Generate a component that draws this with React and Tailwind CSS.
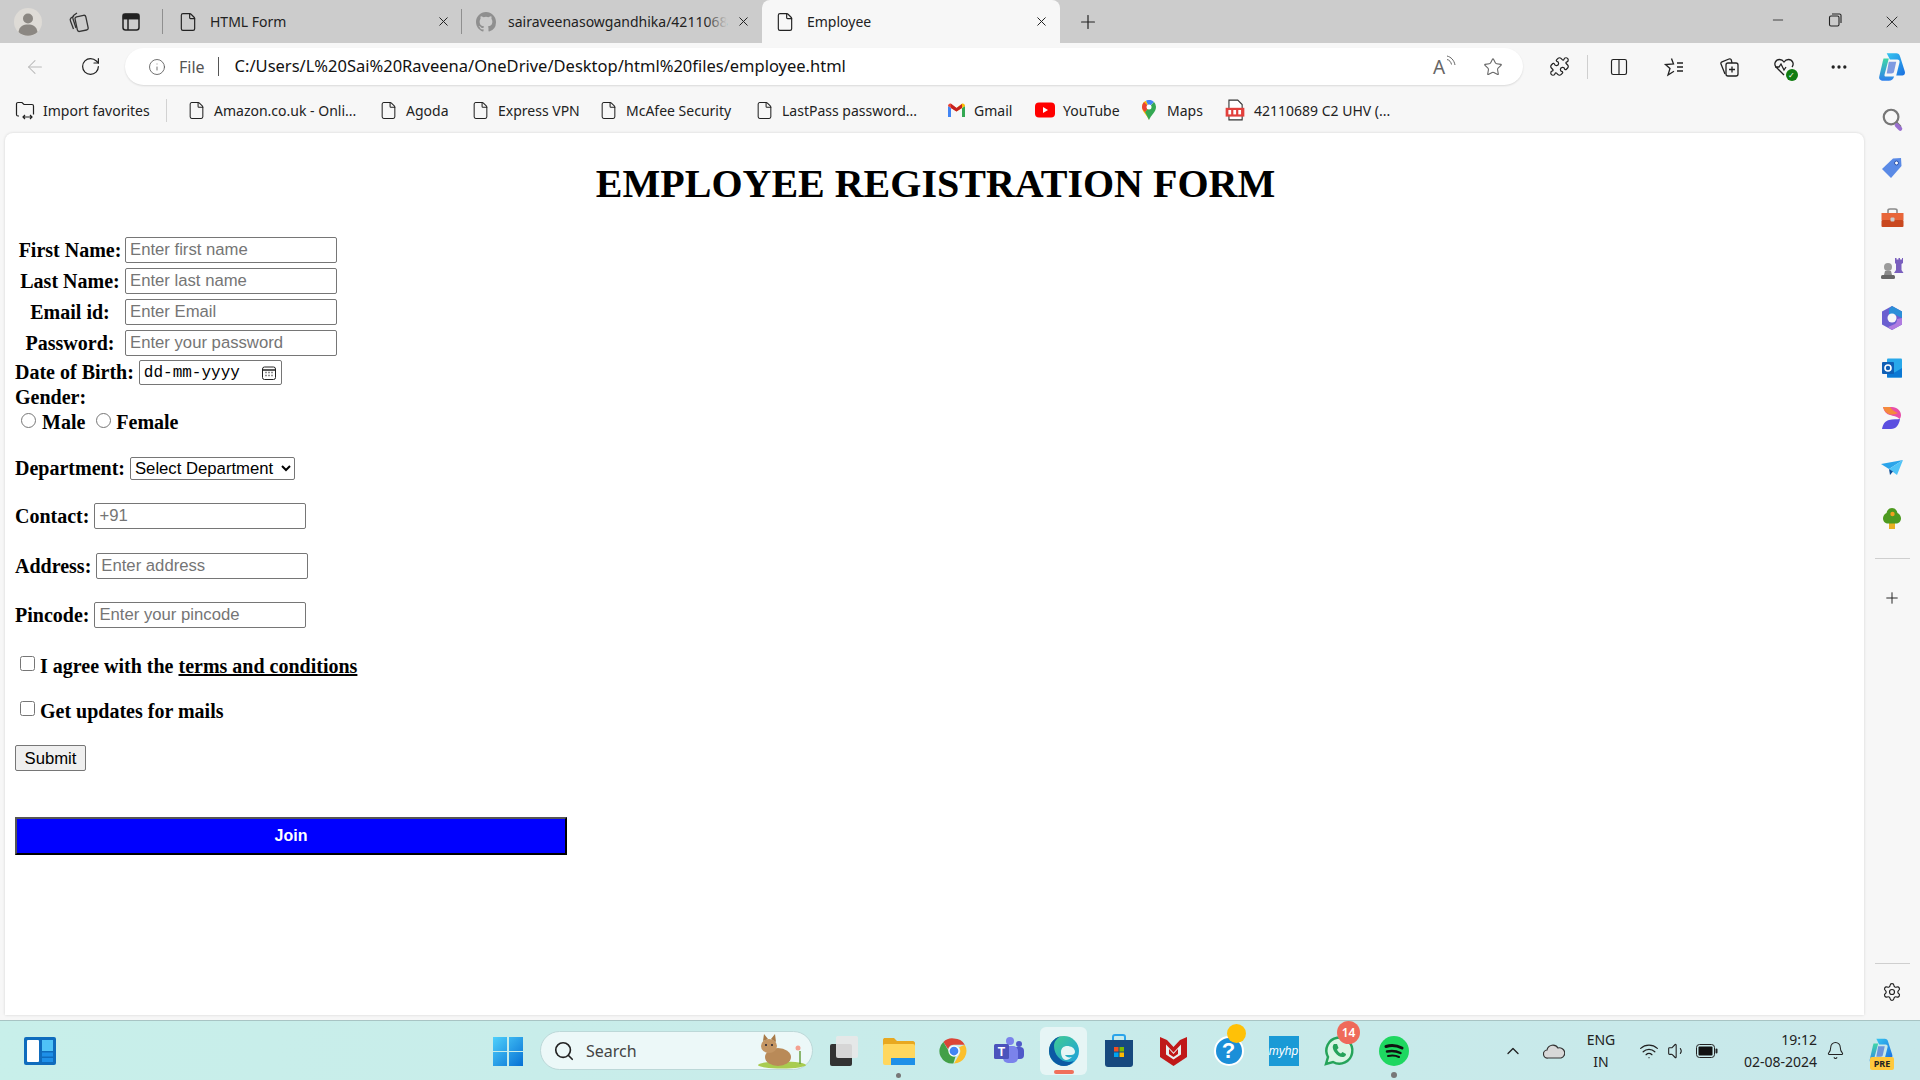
import React from "react";
import { ArrowLeft, Bell, ChevronUp, Columns2, File, Info, Minus, MoreHorizontal, Plus, Puzzle, RotateCw, Search, Settings, Star, Volume1, Wifi, X } from "lucide-react";

function Doc() {
  return <File size={20} strokeWidth={1.4} className="text-[#222]" />;
}

function GithubMark() {
  return (
    <svg width="20" height="20" viewBox="0 0 16 16" fill="#8f8f8f">
      <path d="M8 0C3.58 0 0 3.58 0 8c0 3.54 2.29 6.53 5.47 7.59.4.07.55-.17.55-.38v-1.34c-2.23.48-2.7-1.07-2.7-1.07-.36-.92-.89-1.17-.89-1.17-.73-.5.05-.49.05-.49.8.06 1.23.83 1.23.83.72 1.22 1.87.87 2.33.66.07-.52.28-.87.5-1.07-1.78-.2-3.64-.89-3.64-3.95 0-.87.31-1.59.82-2.15-.08-.2-.36-1.02.08-2.12 0 0 .67-.21 2.2.82a7.6 7.6 0 0 1 4 0c1.53-1.04 2.2-.82 2.2-.82.44 1.1.16 1.92.08 2.12.51.56.82 1.27.82 2.15 0 3.07-1.87 3.75-3.65 3.95.29.25.54.73.54 1.48v2.2c0 .21.15.46.55.38A8 8 0 0 0 16 8c0-4.42-3.58-8-8-8z" />
    </svg>
  );
}

function CopilotIcon({ size = 30 }) {
  return (
    <svg width={size} height={size} viewBox="0 0 32 32">
      <defs>
        <linearGradient id="cop1" x1="0" y1="0" x2="1" y2="1">
          <stop offset="0" stopColor="#36c6f0" />
          <stop offset="1" stopColor="#1b6fe0" />
        </linearGradient>
        <linearGradient id="cop2" x1="0" y1="0" x2="0" y2="1">
          <stop offset="0" stopColor="#3fd6a8" />
          <stop offset="1" stopColor="#2f80ed" />
        </linearGradient>
      </defs>
      <path d="M11 3h9c2 0 3 1 3.6 3L28 20c.8 2.6-.6 4-3 4h-5l3-12c.5-2-.6-3-2-3h-7z" fill="url(#cop1)" />
      <path d="M8 8h5l-4 15c-.4 1.5.4 2 1.5 2H18c-1 3-2.5 4-5 4H8c-3 0-4.6-1.6-4-4l3-13c.2-1 .5-2 1-4z" fill="url(#cop2)" />
      <path d="M13 11h7l-2 9c-.3 1.5-1 2-2.5 2H11z" fill="#1d4fd0" opacity="0.55" />
    </svg>
  );
}

function TabBar() {
  return (
    <div className="h-[43px] bg-[#cccccc] flex items-center text-[14px] text-[#222] font-['Noto_Sans',sans-serif] shrink-0">
      <div className="w-[56px] flex justify-center">
        <svg width="28" height="28" viewBox="0 0 28 28">
          <circle cx="14" cy="14" r="14" fill="#dedbd6" />
          <circle cx="14" cy="10.5" r="5" fill="#8b8782" />
          <path d="M4.5 24c1-6 5-7.5 9.5-7.5s8.500 1.500 9.500 7.500a14 14 0 0 1-19 0z" fill="#8b8782" />
        </svg>
      </div>
      <div className="w-[44px] flex justify-center">
        <svg width="22" height="22" viewBox="0 0 22 22" fill="none" stroke="#333" strokeWidth="1.300">
          <rect x="9" y="5" width="11" height="15" rx="2" transform="rotate(-12 14 12)" />
          <path d="M7 5 4 7c-1 1-1 2-.5 3l3 8M10 2 6.500 4.500C5.500 5.500 5.500 6.500 6 8l3 9" />
        </svg>
      </div>
      <div className="w-[62px] flex justify-center">
        <svg width="20" height="20" viewBox="0 0 20 20" fill="none" stroke="#222" strokeWidth="1.500">
          <rect x="2" y="2" width="16" height="16" rx="2.500" />
          <path d="M2 6.500h16M7 6.500V18" />
          <path d="M2.500 2.500h15v4h-15z" fill="#222" />
        </svg>
      </div>
      <div className="w-px h-[25px] bg-[#8f8f8f] mr-[15px]" />
      <div className="w-[283px] flex items-center pr-[10px]">
        <Doc />
        <span className="ml-[12px] pb-[1px]">HTML Form</span>
        <X size={15} strokeWidth={1.6} className="ml-auto" />
      </div>
      <div className="w-px h-[25px] bg-[#8f8f8f] mr-[14px]" />
      <div className="w-[286px] flex items-center pr-[11px]">
        <GithubMark />
        <span className="relative ml-[12px] pb-[1px] whitespace-nowrap">
          sairaveenasowgandhika/4211068
          <span className="absolute right-0 top-0 bottom-0 w-[22px] bg-gradient-to-r from-transparent to-[#cccccc]" />
        </span>
        <X size={15} strokeWidth={1.6} className="ml-auto" />
      </div>
      <div className="w-[298px] h-[43px] bg-[#f7f7f7] rounded-t-[8px] flex items-center pl-[13px] pr-[11px]">
        <Doc />
        <span className="ml-[12px] pb-[1px]">Employee</span>
        <X size={15} strokeWidth={1.6} className="ml-auto" />
      </div>
      <Plus size={22} strokeWidth={1.3} className="ml-[17px]" />
      <div className="ml-auto flex">
        <div className="w-[57px] flex justify-center"><Minus size={16} strokeWidth={1.2} /></div>
        <div className="w-[57px] flex justify-center">
          <svg width="16" height="16" viewBox="0 0 16 16" fill="none" stroke="#222" strokeWidth="1.100">
            <rect x="2.500" y="4" width="9.500" height="10" rx="1.500" />
            <path d="M5 2h7.500a1.500 1.500 0 0 1 1.500 1.500V11" />
          </svg>
        </div>
        <div className="w-[57px] flex justify-center"><X size={20} strokeWidth={1.1} /></div>
      </div>
    </div>
  );
}

function Toolbar() {
  return (
    <div className="h-[47px] flex items-center shrink-0 text-[#222]">
      <div className="w-[70px] flex justify-center"><ArrowLeft size={22} strokeWidth={1.1} className="text-[#b9b9b9]" /></div>
      <div className="w-[40px] flex justify-center"><RotateCw size={21} strokeWidth={1.4} /></div>
      <div className="w-[1398px] ml-[15px] h-[37px] bg-white rounded-full shadow-[0_1px_2px_rgba(0,0,0,0.12)] flex items-center pl-[23px] pr-[20px] font-['Noto_Sans',sans-serif]">
        <Info size={18} strokeWidth={1.1} className="text-[#555]" />
        <span className="ml-[13px] text-[16px] text-[#555]">File</span>
        <div className="w-px h-[19px] bg-[#555] ml-[13px]" />
        <span className="ml-[16px] text-[16.5px] text-[#111] whitespace-nowrap">C:/Users/L%20Sai%20Raveena/OneDrive/Desktop/html%20files/employee.html</span>
        <div className="ml-auto flex items-center gap-[29px] text-[#666]">
          <span className="relative w-[21px] h-[22px] text-[19px] leading-[22px] font-['Noto_Sans',sans-serif]">
            A
            <svg className="absolute -right-[3px] -top-[1px]" width="11" height="12" viewBox="0 0 11 12" fill="none" stroke="#666" strokeWidth="1">
              <path d="M1 1c4 1 7 4 8 9M1 4.500c2.500.5 4 2.500 4.500 5" />
            </svg>
          </span>
          <Star size={20} strokeWidth={1.3} />
        </div>
      </div>
      <div className="w-[9px]" />
      <div className="w-[55px] flex justify-center"><Puzzle size={21} strokeWidth={1.4} /></div>
      <div className="w-px h-[24px] bg-[#cfcfcf] mr-[3px]" />
      <div className="w-[55px] flex justify-center"><Columns2 size={20} strokeWidth={1.4} /></div>
      <div className="w-[55px] flex justify-center">
        <svg width="22" height="22" viewBox="0 0 22 22" fill="none" stroke="#222" strokeWidth="1.300">
          <path d="M8.500 2.500 10.500 8l-8 .5 4.500 4-2 6.500 6-3.800M14 7h6M14 11h6M14 15h6" />
        </svg>
      </div>
      <div className="w-[55px] flex justify-center">
        <svg width="22" height="22" viewBox="0 0 22 22" fill="none" stroke="#222" strokeWidth="1.300">
          <rect x="8" y="7" width="12" height="13" rx="2" />
          <path d="M14 10.500v6M11 13.500h6M7 18 3 8c-.4-1 0-1.800 1-2.200L11 3c1-.4 2 0 2.300 1L14 7" />
        </svg>
      </div>
      <div className="w-[55px] flex justify-center">
        <span className="relative w-[22px] h-[22px]">
          <svg width="22" height="22" viewBox="0 0 22 22" fill="none" stroke="#222" strokeWidth="1.300">
            <path d="M11 19 3 11C.5 8 2.500 3.500 6.500 3.500c2 0 3.500 1 4.500 2.500 1-1.500 2.500-2.500 4.500-2.500 4 0 6 4.500 3.500 7.500M2 11h4l2-3 3 6 2-3" />
          </svg>
          <span className="absolute -right-[3px] -bottom-[3px] w-[12px] h-[12px] rounded-full bg-[#107c10] text-white text-[8px] leading-[12px] text-center">✓</span>
        </span>
      </div>
      <div className="w-[55px] flex justify-center"><MoreHorizontal size={20} strokeWidth={2} /></div>
      <div className="w-[51px] flex justify-center"><CopilotIcon size={34} /></div>
    </div>
  );
}

function Bookmark({ className, icon, label }) {
  return (
    <div className={"flex items-center whitespace-nowrap " + className}>
      {icon}
      <span className="ml-[8px]">{label}</span>
    </div>
  );
}

function BookmarksBar() {
  const doc = <File size={19} strokeWidth={1.3} className="text-[#222]" />;
  return (
    <div className="h-[40px] mb-[3px] flex items-center pl-[15px] text-[14px] text-[#222] font-['Noto_Sans',sans-serif]">
      <Bookmark
        className="w-[151px]"
        label="Import favorites"
        icon={
          <svg width="20" height="20" viewBox="0 0 20 20" fill="none" stroke="#222" strokeWidth="1.200">
            <path d="M4 16H3a1.500 1.500 0 0 1-1.500-1.500V4A1.500 1.500 0 0 1 3 2.500h4l2 2h8A1.500 1.500 0 0 1 18.500 6v8.500M8 17h9M10 15l-2 2 2 2M15 15l2 2-2 2" />
          </svg>
        }
      />
      <div className="w-px h-[23px] bg-[#d2d2d2] mr-[20px]" />
      <Bookmark className="w-[192px]" icon={doc} label="Amazon.co.uk - Onli..." />
      <Bookmark className="w-[92px]" icon={doc} label="Agoda" />
      <Bookmark className="w-[128px]" icon={doc} label="Express VPN" />
      <Bookmark className="w-[156px]" icon={doc} label="McAfee Security" />
      <Bookmark className="w-[192px]" icon={doc} label="LastPass password..." />
      <Bookmark
        className="w-[88px]"
        label="Gmail"
        icon={
          <svg width="19" height="15" viewBox="0 0 19 15">
            <path d="M1 14V3l3 2v9z" fill="#4285f4" />
            <path d="M15 14V5l3-2v11z" fill="#34a853" />
            <path d="M1 3c0-2 2-3 3.500-2L9.500 5v3.500L1 3z" fill="#ea4335" />
            <path d="M9.500 5l5-4C16 0 18 1 18 3l-8.500 5.500z" fill="#fbbc04" />
            <path d="M4 5l5.500 3.500L15 5V1L9.500 5 4 1z" fill="#c5221f" />
          </svg>
        }
      />
      <Bookmark
        className="w-[107px]"
        label="YouTube"
        icon={
          <svg width="20" height="16" viewBox="0 0 20 16">
            <rect width="20" height="15" y="0.500" rx="4" fill="#f00" />
            <path d="M8 5l5 3-5 3z" fill="#fff" />
          </svg>
        }
      />
      <Bookmark
        className="w-[83px]"
        label="Maps"
        icon={
          <svg className="mr-[3px]" width="14" height="20" viewBox="0 0 14 20">
            <path d="M7 20C5 15 0 12 0 7a7 7 0 0 1 4-6.300L7 7z" fill="#fbbc04" />
            <path d="M4 .700A7 7 0 0 1 12 2L7 7z" fill="#4285f4" />
            <path d="M12 2a7 7 0 0 1 2 5c0 5-5 8-7 13L3 12z" fill="#34a853" />
            <path d="M0 7a7 7 0 0 1 2-5l5 5-4 5C1 10 0 9 0 7z" fill="#ea4335" />
            <circle cx="7" cy="7" r="2.500" fill="#fff" />
          </svg>
        }
      />
      <Bookmark
        className="w-[170px]"
        label="42110689 C2 UHV (..."
        icon={
          <svg className="mr-[1px]" width="20" height="22" viewBox="0 0 18 20">
            <path d="M3.500 1h8L15.500 5v14h-12z" fill="#fff" stroke="#333" strokeWidth="1" />
            <rect x="0.500" y="8" width="17" height="8" fill="#e2403c" />
            <rect x="3" y="10" width="2.500" height="4" fill="#fff" />
            <rect x="7.500" y="10" width="2.500" height="4" fill="#fff" />
            <rect x="12" y="10" width="2.500" height="4" fill="#fff" />
          </svg>
        }
      />
    </div>
  );
}

const labelClass = "font-['Liberation_Serif',serif] font-bold text-[20px] leading-[25px] text-black whitespace-nowrap";
const inputClass = "w-[212px] h-[26px] px-[4px] border border-[#767676] rounded-[2px] bg-white font-['Liberation_Sans',sans-serif] text-[16.7px] text-black placeholder:text-[#757575] outline-none";

function TableRow({ label, type = "text", placeholder }) {
  return (
    <div className="flex items-center h-[26px] mb-[5px]">
      <div className={"w-[110px] text-center " + labelClass}>{label}</div>
      <input type={type} placeholder={placeholder} className={inputClass} />
    </div>
  );
}

function EmployeeForm() {
  return (
    <div className="flex-1 ml-[5px] bg-white rounded-t-[8px] shadow-[0_0_3px_rgba(0,0,0,0.15)] pl-[10px] pt-[28px]">
      <h1 className="font-['Liberation_Serif',serif] font-bold text-[40px] leading-[46px] text-black text-center pr-[8px]">EMPLOYEE REGISTRATION FORM</h1>
      <form className="mt-[30px]">
        <TableRow label="First Name:" placeholder="Enter first name" />
        <TableRow label="Last Name:" placeholder="Enter last name" />
        <TableRow label="Email id:" placeholder="Enter Email" />
        <TableRow label="Password:" type="password" placeholder="Enter your password" />

        <div className="flex items-center h-[25px] -mt-[1px]">
          <span className={labelClass}>Date of Birth:</span>
          <div className="ml-[5px] w-[143px] h-[25px] border border-[#767676] rounded-[2px] flex items-center pl-[4px] pr-[4px] font-['Liberation_Mono',monospace] text-[16px] text-black">
            dd-mm-yyyy
            <svg className="ml-auto mr-[1px]" width="14" height="14" viewBox="0 0 14 14" fill="none" stroke="#222" strokeWidth="1">
              <rect x="0.500" y="1" width="13" height="12.500" rx="2" />
              <path d="M.5 4h13" strokeWidth="1.500" />
              <path d="M3.500 6.500h1M6.500 6.500h1M9.500 6.500h1M3.500 9.500h1M6.500 9.500h1M9.500 9.500h1" strokeWidth="1.400" />
            </svg>
          </div>
        </div>
        <div className={"h-[25px] " + labelClass}>Gender:</div>
        <div className="flex items-center h-[25px] pl-[6px]">
          <input type="radio" name="gender" className="w-[15px] h-[15px] m-0 -mt-[5px]" />
          <span className={"ml-[6px] " + labelClass}>Male</span>
          <input type="radio" name="gender" className="w-[15px] h-[15px] m-0 ml-[11px] -mt-[5px]" />
          <span className={"ml-[5px] " + labelClass}>Female</span>
        </div>

        <div className="flex items-center h-[23px] mt-[22px]">
          <span className={labelClass}>Department:</span>
          <select className="ml-[5px] w-[165px] h-[23px] border border-[#767676] rounded-[2px] bg-white font-['Liberation_Sans',sans-serif] text-[16.7px] text-black appearance-auto">
            <option>Select Department</option>
          </select>
        </div>

        <div className="flex items-center mt-[23px]">
          <span className={labelClass}>Contact:</span>
          <input placeholder="+91" className={"ml-[5px] " + inputClass} />
        </div>
        <div className="flex items-center mt-[24px]">
          <span className={labelClass}>Address:</span>
          <input placeholder="Enter address" className={"ml-[5px] " + inputClass} />
        </div>
        <div className="flex items-center mt-[23px]">
          <span className={labelClass}>Pincode:</span>
          <input placeholder="Enter your pincode" className={"ml-[5px] " + inputClass} />
        </div>

        <div className="flex items-center h-[24px] mt-[26px] pl-[5px]">
          <input type="checkbox" className="w-[15px] h-[15px] m-0 -mt-[5px]" />
          <span className={"ml-[5px] text-[19px] " + labelClass}>I agree with the <u>terms and conditions</u></span>
        </div>
        <div className="flex items-center h-[24px] mt-[21px] pl-[5px]">
          <input type="checkbox" className="w-[15px] h-[15px] m-0 -mt-[5px]" />
          <span className={"ml-[5px] text-[19px] " + labelClass}>Get updates for mails</span>
        </div>

        <button type="button" className="block mt-[22px] w-[71px] h-[26px] bg-[#efefef] border border-[#767676] rounded-[2px] font-['Liberation_Sans',sans-serif] text-[16.7px] text-black">Submit</button>
        <button type="button" className="block mt-[46px] w-[552px] h-[38px] bg-[#0000ff] border-2 border-t-[#555555] border-l-[#555555] border-r-black border-b-black font-['Liberation_Sans',sans-serif] font-bold text-[16px] text-white">Join</button>
      </form>
    </div>
  );
}

function Sidebar() {
  return (
    <div className="w-[56px] shrink-0 flex flex-col items-center pt-[3px]">
      <div className="h-[50px] flex items-center justify-center">
        <span className="relative w-[22px] h-[22px]">
          <Search size={22} strokeWidth={2.4} className="text-[#777]" />
          <span className="absolute right-0 bottom-0 w-[9px] h-[4px] bg-[#9a6fd0] rotate-45 rounded-full" />
        </span>
      </div>
      <div className="h-[50px] flex items-center justify-center">
        <svg width="22" height="22" viewBox="0 0 22 22">
          <path d="M1 12 12 1.500l8-.5.500 8L10 21z" fill="#5a8ae6" />
          <circle cx="15.500" cy="6" r="2" fill="#fff" stroke="#2a4fa8" />
        </svg>
      </div>
      <div className="h-[50px] flex items-center justify-center">
        <svg width="23" height="20" viewBox="0 0 23 20">
          <path d="M7 5V2.500C7 1.500 8 1 9 1h5c1 0 2 .5 2 1.500V5" fill="none" stroke="#8a8a8a" strokeWidth="1.600" />
          <rect x="0.500" y="5" width="22" height="7" fill="#e8663a" />
          <rect x="0.500" y="12" width="22" height="7" rx="1" fill="#c9481f" />
          <rect x="9.500" y="9.500" width="4" height="4" rx="1" fill="#ccc" />
        </svg>
      </div>
      <div className="h-[50px] flex items-center justify-center">
        <svg width="24" height="24" viewBox="0 0 24 24">
          <path d="M15 2h1.500v1.500h2V2h1.500v1.500h2V2H23v5l-1.500 1v6l2 3H14l2-3V8l-1-1z" fill="#7a5fbe" />
          <circle cx="8" cy="11" r="4" fill="#9b9b9b" />
          <path d="M5 15h6l1 4H4z" fill="#8a8a8a" />
          <rect x="1" y="19" width="14" height="4" rx="1.500" fill="#666" />
        </svg>
      </div>
      <div className="h-[50px] flex items-center justify-center">
        <svg width="22" height="24" viewBox="0 0 22 24">
          <path d="M11 0 21 5.500v13L11 24 1 18.500v-13z" fill="#6a5fd0" />
          <path d="M11 0 21 5.500V12l-6-3c-2-1-5-1-7 .5V3z" fill="#2b8fd8" />
          <path d="M21 12v6.500L11 24l-4-3 7-3c1.500-1 2-3 2-5z" fill="#b07be0" />
          <circle cx="11" cy="12" r="4.500" fill="#f7f7f7" />
        </svg>
      </div>
      <div className="h-[50px] flex items-center justify-center">
        <svg width="21" height="20" viewBox="0 0 21 20">
          <rect x="5" y="0.500" width="15" height="19" rx="1" fill="#28a8ea" />
          <path d="M5 10l7.500 4.500L20 10v9.500H5z" fill="#0a78d4" />
          <rect x="0" y="4" width="12" height="12" rx="1" fill="#0f5fb5" />
          <circle cx="6" cy="10" r="3" fill="none" stroke="#fff" strokeWidth="1.600" />
        </svg>
      </div>
      <div className="h-[50px] flex items-center justify-center">
        <svg width="20" height="22" viewBox="0 0 20 22">
          <path d="M1 0h9c5 0 9 4 9 8 0 1.500-.5 3-1.500 4C15 9 11 9 8 8 4 7 2 4 1 0z" fill="#e84fa8" />
          <path d="M1 0h7c2 3 5 5 8 6-4 2-8 2-11 0C3 5 2 3 1 0z" fill="#f58a3c" />
          <path d="M0 22c1-5 3-8 7-9 4-1 8-.5 11-1-1 6-4 10-9 10z" fill="#5b4fe0" />
        </svg>
      </div>
      <div className="h-[50px] flex items-center justify-center">
        <svg width="22" height="16" viewBox="0 0 22 16">
          <path d="M0 4 22 0 8 9z" fill="#2aa4ea" />
          <path d="M22 0 16 15 8 9z" fill="#4fc3f7" />
          <path d="M8 9l1 6 3-3.500z" fill="#0a4f9a" />
        </svg>
      </div>
      <div className="h-[50px] flex items-center justify-center">
        <svg width="18" height="21" viewBox="0 0 18 21">
          <rect x="6" y="14" width="6" height="7" fill="#e8b020" />
          <path d="M9 0c3 0 5 2 5.500 5C17 6 18 8.500 18 10.500c0 3-2.500 5-5 5H5c-2.500 0-5-2-5-5C0 8.500 1 6 3.500 5 4 2 6 0 9 0z" fill="#4d9a1f" />
          <circle cx="9.500" cy="6" r="2.200" fill="#f0a020" />
        </svg>
      </div>
      <div className="w-[35px] h-px bg-[#cfcfcf] mt-[15px]" />
      <div className="h-[78px] flex items-center justify-center"><Plus size={18} strokeWidth={1.3} className="text-[#222]" /></div>
      <div className="w-[35px] h-px bg-[#cfcfcf] mt-auto" />
      <div className="h-[56px] flex items-center justify-center"><Settings size={20} strokeWidth={1.4} className="text-[#222]" /></div>
    </div>
  );
}

function TaskSlot({ className = "", children }) {
  return <div className={"relative w-[55px] h-[45px] flex items-center justify-center " + className}>{children}</div>;
}

function Taskbar() {
  return (
    <div className="h-[60px] shrink-0 flex items-center border-t border-[#a8c4c4] bg-gradient-to-r from-[#c8efea] to-[#c8e8ea] font-['Noto_Sans',sans-serif] text-[#222]">
      <div className="w-[80px] flex justify-center">
        <svg width="32" height="28" viewBox="0 0 32 28">
          <rect width="32" height="28" rx="2" fill="#0f6cbd" />
          <rect x="3" y="3" width="12" height="22" rx="1" fill="#fff" />
          <rect x="18" y="3" width="11" height="11" fill="#4fc3f7" />
          <rect x="18" y="15.500" width="11" height="4" fill="#1e90e8" />
          <rect x="18" y="21" width="11" height="4" fill="#1e90e8" />
        </svg>
      </div>
      <div className="w-[400px]" />
      <TaskSlot>
        <svg width="30" height="30" viewBox="0 0 30 30">
          <defs>
            <linearGradient id="win" x1="0" y1="0" x2="1" y2="1">
              <stop offset="0" stopColor="#4fd0fb" />
              <stop offset="1" stopColor="#0670d4" />
            </linearGradient>
          </defs>
          <path d="M0 1h14v14H0zM16 1h14v14H16zM0 16h14v14H0zM16 16h14v14H16z" fill="url(#win)" />
        </svg>
      </TaskSlot>
      <div className="ml-[5px] mr-[3px] w-[273px] h-[39px] rounded-full bg-[#ecf8f8] border border-[#bcd8d8] flex items-center pl-[12px] pr-[6px] text-[16px] text-[#444]">
        <Search size={22} strokeWidth={1.8} className="text-[#222]" />
        <span className="ml-[11px]">Search</span>
        <svg className="ml-auto" width="54" height="36" viewBox="0 0 54 36">
          <ellipse cx="30" cy="32" rx="24" ry="3.500" fill="#a8cc50" />
          <path d="M48 31V18" stroke="#6aa040" strokeWidth="1.500" />
          <circle cx="46" cy="15" r="2.500" fill="#f4a090" />
          <ellipse cx="26" cy="24" rx="13" ry="9" fill="#b98a58" />
          <ellipse cx="17" cy="13" rx="8" ry="7" fill="#c49664" />
          <path d="M11 8l1-7 4 5zM19 6l4-5 1 8z" fill="#a87a48" />
          <circle cx="14" cy="12" r="1" fill="#223" />
          <circle cx="20" cy="12" r="1" fill="#223" />
        </svg>
      </div>
      <TaskSlot>
        <span className="relative w-[28px] h-[30px]">
          <span className="absolute left-0 bottom-0 w-[22px] h-[22px] bg-[#333] rounded-[2px]" />
          <span className="absolute right-0 top-0 w-[22px] h-[22px] bg-[#e8e8e8] opacity-90 rounded-[2px]" />
        </span>
      </TaskSlot>
      <TaskSlot>
        <svg width="32" height="28" viewBox="0 0 32 28">
          <path d="M0 3c0-1.500 1-2 2-2h9l3 3h16c1 0 2 1 2 2v4H0z" fill="#e8a820" />
          <rect y="7" width="32" height="21" rx="2" fill="#ffd75e" />
          <rect x="8" y="21" width="24" height="7" fill="#1e90e8" />
        </svg>
        <span className="absolute bottom-[-5px] w-[5px] h-[5px] rounded-full bg-[#777]" />
      </TaskSlot>
      <TaskSlot>
        <svg width="30" height="30" viewBox="0 0 48 48">
          <path d="M24 4a20 20 0 0 1 17.300 10H24a10 10 0 0 0-9.500 7L7 9.500A20 20 0 0 1 24 4z" fill="#db4437" />
          <path d="M41.300 14A20 20 0 0 1 24 44l8.600-15A10 10 0 0 0 32 18z" fill="#fbc02d" />
          <path d="M7 9.500 15.500 24a10 10 0 0 0 12 5l-4.500 15A20 20 0 0 1 7 9.500z" fill="#43a047" />
          <circle cx="24" cy="24" r="9" fill="#fff" />
          <circle cx="24" cy="24" r="7" fill="#4285f4" />
        </svg>
      </TaskSlot>
      <TaskSlot>
        <svg width="32" height="30" viewBox="0 0 32 30">
          <circle cx="17" cy="5" r="4" fill="#7b83eb" />
          <circle cx="26" cy="8" r="3" fill="#5059c9" />
          <rect x="20" y="11" width="11" height="12" rx="4" fill="#5059c9" />
          <rect x="10" y="10" width="15" height="17" rx="5" fill="#7b83eb" />
          <rect x="1" y="8" width="15" height="15" rx="1.500" fill="#4b53bc" />
          <text x="8.500" y="20" textAnchor="middle" fontSize="12" fontWeight="700" fill="#fff" fontFamily="Liberation Sans">T</text>
        </svg>
      </TaskSlot>
      <div className="w-[55px] flex justify-center">
        <div className="relative w-[47px] h-[48px] bg-[#e6f5f5] rounded-[6px] flex items-center justify-center">
          <svg width="32" height="32" viewBox="0 0 32 32">
            <defs>
              <linearGradient id="edge" x1="0" y1="0" x2="1" y2="1">
                <stop offset="0" stopColor="#45d08a" />
                <stop offset="1" stopColor="#1b9de2" />
              </linearGradient>
            </defs>
            <circle cx="16" cy="16" r="15" fill="url(#edge)" />
            <path d="M1 16C1 7 8 1 16 1c-6 0-10 5-10 10 0 10 9 19 20 15-3 3-6 5-10 5C8 31 1 24 1 16z" fill="#0c59a4" />
            <path d="M13 17c0-4 3-6 6-6 4 0 8 2 8 6 0 2-2 3-4 3h-6c1 2 4 3 7 2-2 2-4 3-6 3-3 0-5-4-5-8z" fill="#e6f5f5" />
          </svg>
          <span className="absolute bottom-[1px] w-[20px] h-[4px] rounded-full bg-[#f0705a]" />
        </div>
      </div>
      <TaskSlot>
        <svg width="30" height="34" viewBox="0 0 30 34">
          <path d="M9 6V3a2 2 0 0 1 2-2h8a2 2 0 0 1 2 2v3" fill="none" stroke="#2aa4ea" strokeWidth="2" />
          <path d="M1 6h28v24a3 3 0 0 1-3 3H4a3 3 0 0 1-3-3z" fill="#17497e" />
          <rect x="10" y="13" width="4.500" height="4.500" fill="#f25022" />
          <rect x="15.500" y="13" width="4.500" height="4.500" fill="#7fba00" />
          <rect x="10" y="18.500" width="4.500" height="4.500" fill="#00a4ef" />
          <rect x="15.500" y="18.500" width="4.500" height="4.500" fill="#ffb900" />
        </svg>
      </TaskSlot>
      <TaskSlot>
        <svg width="27" height="30" viewBox="0 0 27 30">
          <path d="M0 1 7 4l6.500 7L20 4l7-3v20l-13.500 9L0 21z" fill="#c01818" />
          <path d="M6 8.500l7.500 8 7.500-8v10l-7.500 5-7.500-5z" fill="#e6f0f0" />
          <path d="M9 13l4.500 5 4.500-5v5l-4.500 3-4.500-3z" fill="#c01818" />
        </svg>
      </TaskSlot>
      <TaskSlot>
        <span className="relative w-[30px] h-[30px] rounded-full bg-[#1b8fd8] border-[2px] border-white text-white text-[22px] font-bold leading-[26px] text-center font-['Liberation_Sans',sans-serif]">?</span>
        <span className="absolute right-[10px] top-[-4px] w-[19px] h-[19px] rounded-full bg-[#ffc107]" />
      </TaskSlot>
      <TaskSlot>
        <span className="w-[30px] h-[30px] bg-[#1a9ad6] text-white text-[12px] italic text-center leading-[30px] font-['Liberation_Sans',sans-serif]">myhp</span>
      </TaskSlot>
      <TaskSlot>
        <svg width="32" height="32" viewBox="0 0 32 32" fill="none">
          <path d="M3 29l2-7A13 13 0 1 1 10 27z" fill="#d8f5e4" stroke="#25a35a" strokeWidth="2.500" />
          <path d="M11 9c-2 2-1.500 5 1 8.500s6 5 8.500 4.500c1.500-.5 2.500-1.500 2.500-3l-3.500-2-1.500 1.500c-1.500-.5-3.500-2.500-4-4l1.500-1.500-1.500-4c-1 0-2 0-3 0z" fill="#25a35a" />
        </svg>
        <span className="absolute right-[6px] top-[-7px] w-[23px] h-[23px] rounded-full bg-[#ef6a5a] text-white text-[12px] leading-[23px] text-center font-semibold">14</span>
      </TaskSlot>
      <TaskSlot>
        <svg width="30" height="30" viewBox="0 0 30 30" fill="none" stroke="#111" strokeLinecap="round">
          <circle cx="15" cy="15" r="15" fill="#1ed760" stroke="none" />
          <path d="M7 10.500c5-1.500 11-1 16 1.500" strokeWidth="3" />
          <path d="M8 15.500c4.500-1 9.500-.5 13.500 1.500" strokeWidth="2.500" />
          <path d="M9 20c4-1 8-.5 11 1" strokeWidth="2" />
        </svg>
        <span className="absolute bottom-[-5px] w-[6px] h-[6px] rounded-full bg-[#777]" />
      </TaskSlot>

      <div className="ml-[64px] w-[56px] flex justify-center"><ChevronUp size={20} strokeWidth={1.6} /></div>
      <div className="w-[26px] flex justify-center">
        <svg width="22" height="16" viewBox="0 0 22 16">
          <path d="M5 15a4 4 0 0 1-1-8 6 6 0 0 1 11-2 5 5 0 0 1 3 10z" fill="#d8d8d8" stroke="#333" strokeWidth="1.200" />
        </svg>
      </div>
      <div className="w-[68px] text-center text-[14px] leading-[22px]">ENG<br />IN</div>
      <div className="w-[28px] flex justify-center"><Wifi size={20} strokeWidth={1.5} /></div>
      <div className="w-[28px] flex justify-center"><Volume1 size={20} strokeWidth={1.3} /></div>
      <div className="w-[32px] flex justify-center">
        <svg width="22" height="14" viewBox="0 0 22 14">
          <rect x="0.500" y="0.500" width="18" height="13" rx="3" fill="none" stroke="#222" />
          <rect x="2.500" y="2.500" width="14" height="9" rx="1" fill="#111" />
          <rect x="19.500" y="4.500" width="2" height="5" rx="1" fill="#222" />
        </svg>
      </div>
      <div className="w-[94px] text-right text-[14px] leading-[22px]">19:12<br />02-08-2024</div>
      <div className="w-[36px] flex justify-center"><Bell size={19} strokeWidth={1.3} /></div>
      <div className="relative w-[56px] flex justify-center">
        <CopilotIcon size={30} />
        <span className="absolute bottom-[-4px] left-[17px] w-[24px] h-[13px] rounded-[2px] bg-[#ffc83d] text-[#222] text-[9px] leading-[13px] text-center font-bold">PRE</span>
      </div>
    </div>
  );
}

export default function App() {
  return (
    <div className="w-[1920px] h-[1080px] flex flex-col overflow-hidden bg-[#f7f7f7]">
      <TabBar />
      <Toolbar />
      <div className="flex-1 flex min-h-0">
        <div className="w-[1864px] flex flex-col pb-[5px]">
          <BookmarksBar />
          <EmployeeForm />
        </div>
        <Sidebar />
      </div>
      <Taskbar />
    </div>
  );
}
